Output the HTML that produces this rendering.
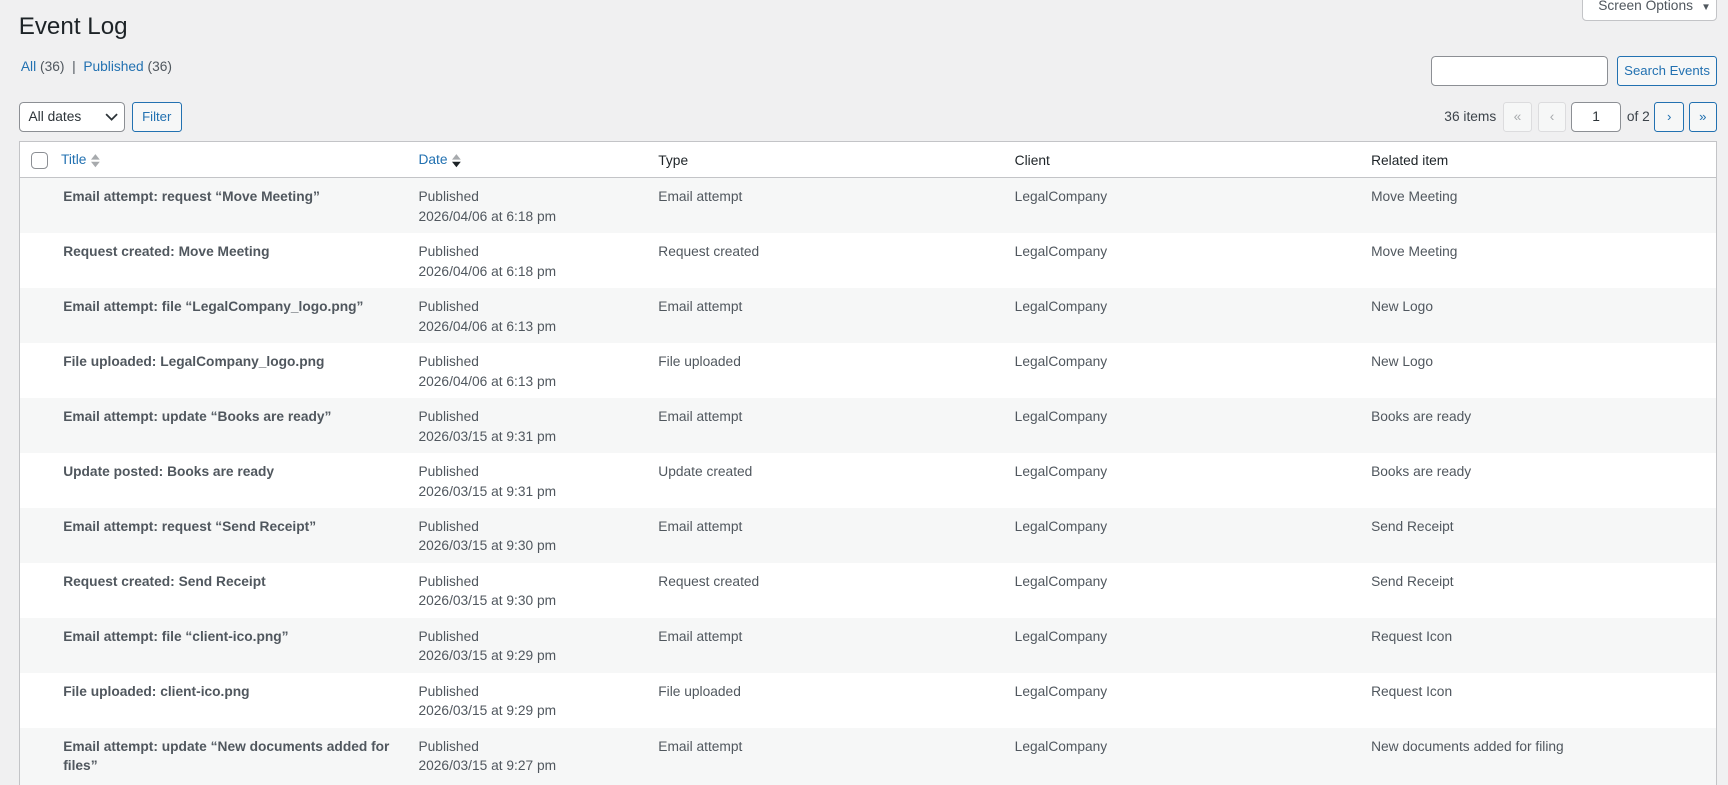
<!DOCTYPE html>
<html><head><meta charset="utf-8">
<style>
html,body{margin:0;padding:0;background:#f0f0f1;overflow:hidden}
body{width:1728px;height:785px}
#z{zoom:1.1;width:1571px;height:714px;position:relative;overflow:hidden;font-family:"Liberation Sans",sans-serif;font-size:12.5px;color:#3c434a}
a{color:#2271b1;text-decoration:none}
h1{position:absolute;left:17px;top:10px;margin:0;font-size:22px;font-weight:400;color:#1d2327;line-height:29px}
.so{position:absolute;left:1438px;top:-8px;width:123px;height:27px;background:#fff;border:1px solid #c3c4c7;border-radius:0 0 4px 4px;box-sizing:border-box;font-size:12.5px;color:#50575e;line-height:26px;padding-left:14px}
.status{position:absolute;left:19px;top:54px;color:#50575e}
.status .c{color:#50575e}
.inp{position:absolute;background:#fff;border:1px solid #8c8f94;border-radius:4px;box-sizing:border-box}
.btn{position:absolute;border:1px solid #2271b1;color:#2271b1;background:#f6f7f7;border-radius:3px;box-sizing:border-box;text-align:center;font-size:12px}
.dis{position:absolute;border:1px solid #dcdcde;background:#f6f7f7;color:#a7aaad;border-radius:3px;box-sizing:border-box;text-align:center}
table{position:absolute;left:17px;top:128px;width:1544px;border-collapse:collapse;table-layout:fixed;background:#fff;border:1px solid #c3c4c7}
th{height:30px;text-align:left;font-weight:400;color:#1d2327;padding:2px 8px 0;border-bottom:1px solid #c3c4c7;font-size:12.5px}
td{vertical-align:top;padding:8px 8px 0;height:42px;line-height:18px;color:#50575e}
tr.s td{background:#f6f7f7}
td.t{font-weight:700;padding-left:10px}
.cb{display:inline-block;width:14px;height:14px;border:1px solid #8c8f94;border-radius:4px;background:#fff;vertical-align:middle}
.ar{display:inline-block;vertical-align:middle;margin-left:4px;width:8px;height:14px}
</style></head><body><div id="z">
<h1>Event Log</h1>
<div class="so">Screen Options <span style="font-size:9px;margin-left:4px">▼</span></div>
<div class="status"><a href="#">All</a> <span class="c">(36)</span> &nbsp;|&nbsp; <a href="#">Published</a> <span class="c">(36)</span></div>
<div class="inp" style="left:1301px;top:51px;width:161px;height:27px"></div>
<div class="btn" style="left:1470px;top:51px;width:91px;height:27px;line-height:25px">Search Events</div>
<div class="inp" style="left:17px;top:93px;width:97px;height:27px;line-height:25px;padding-left:8px;color:#2c3338">All dates<svg style="position:absolute;right:6px;top:9px" width="12" height="8" viewBox="0 0 12 8"><path d="M1 1l5 5 5-5" fill="none" stroke="#2c3338" stroke-width="1.6"/></svg></div>
<div class="btn" style="left:120px;top:93px;width:45px;height:27px;line-height:25px">Filter</div>
<div style="position:absolute;left:1313px;top:99px;color:#3c434a">36 items</div>
<div class="dis" style="left:1366px;top:93px;width:27px;height:27px;line-height:25px">«</div>
<div class="dis" style="left:1398px;top:93px;width:26px;height:27px;line-height:25px">‹</div>
<div class="inp" style="left:1428px;top:93px;width:46px;height:27px;line-height:25px;text-align:center;color:#2c3338">1</div>
<div style="position:absolute;left:1479px;top:99px">of 2</div>
<div class="btn" style="left:1504px;top:93px;width:27px;height:27px;line-height:25px">›</div>
<div class="btn" style="left:1535px;top:93px;width:26px;height:27px;line-height:25px">»</div>
<table>
<colgroup><col style="width:30px"><col style="width:325px"><col style="width:218px"><col style="width:324px"><col style="width:324px"><col></colgroup>
<tr><th style="padding-left:10px"><span class="cb"></span></th>
<th><a href="#">Title</a><svg class="ar" viewBox="0 0 8 14"><path d="M4 1L8 6H0z" fill="#a7aaad"/><path d="M4 13L8 8H0z" fill="#a7aaad"/></svg></th>
<th><a href="#">Date</a><svg class="ar" viewBox="0 0 8 14"><path d="M4 1L8 6H0z" fill="#a7aaad"/><path d="M4 13L8 8H0z" fill="#1d2327"/></svg></th>
<th>Type</th><th>Client</th><th>Related item</th></tr>
<tr class="s"><td></td><td class="t">Email attempt: request “Move Meeting”</td><td>Published<br>2026/04/06 at 6:18 pm</td><td>Email attempt</td><td>LegalCompany</td><td>Move Meeting</td></tr>
<tr><td></td><td class="t">Request created: Move Meeting</td><td>Published<br>2026/04/06 at 6:18 pm</td><td>Request created</td><td>LegalCompany</td><td>Move Meeting</td></tr>
<tr class="s"><td></td><td class="t">Email attempt: file “LegalCompany_logo.png”</td><td>Published<br>2026/04/06 at 6:13 pm</td><td>Email attempt</td><td>LegalCompany</td><td>New Logo</td></tr>
<tr><td></td><td class="t">File uploaded: LegalCompany_logo.png</td><td>Published<br>2026/04/06 at 6:13 pm</td><td>File uploaded</td><td>LegalCompany</td><td>New Logo</td></tr>
<tr class="s"><td></td><td class="t">Email attempt: update “Books are ready”</td><td>Published<br>2026/03/15 at 9:31 pm</td><td>Email attempt</td><td>LegalCompany</td><td>Books are ready</td></tr>
<tr><td></td><td class="t">Update posted: Books are ready</td><td>Published<br>2026/03/15 at 9:31 pm</td><td>Update created</td><td>LegalCompany</td><td>Books are ready</td></tr>
<tr class="s"><td></td><td class="t">Email attempt: request “Send Receipt”</td><td>Published<br>2026/03/15 at 9:30 pm</td><td>Email attempt</td><td>LegalCompany</td><td>Send Receipt</td></tr>
<tr><td></td><td class="t">Request created: Send Receipt</td><td>Published<br>2026/03/15 at 9:30 pm</td><td>Request created</td><td>LegalCompany</td><td>Send Receipt</td></tr>
<tr class="s"><td></td><td class="t">Email attempt: file “client-ico.png”</td><td>Published<br>2026/03/15 at 9:29 pm</td><td>Email attempt</td><td>LegalCompany</td><td>Request Icon</td></tr>
<tr><td></td><td class="t">File uploaded: client-ico.png</td><td>Published<br>2026/03/15 at 9:29 pm</td><td>File uploaded</td><td>LegalCompany</td><td>Request Icon</td></tr>
<tr class="s"><td style="height:70px"></td><td class="t">Email attempt: update “New documents added for files”</td><td>Published<br>2026/03/15 at 9:27 pm</td><td>Email attempt</td><td>LegalCompany</td><td>New documents added for filing</td></tr>
</table>
</div></body></html>
